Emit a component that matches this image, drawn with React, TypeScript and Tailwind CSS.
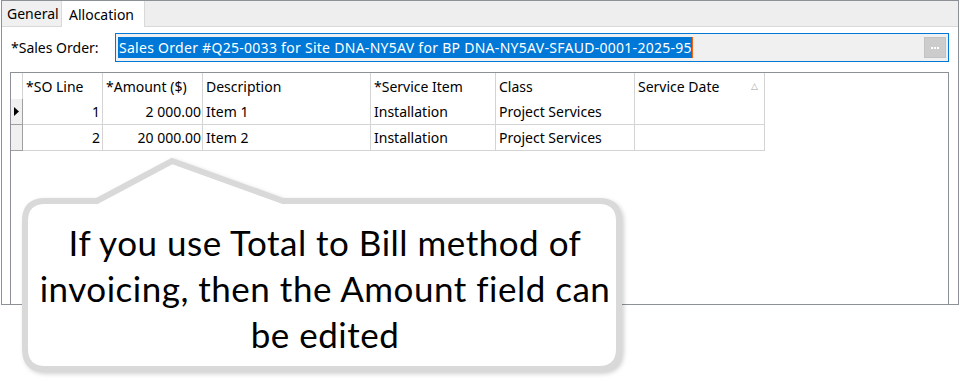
import React from 'react';

const cols = [
  { w: 'w-[80px]', label: '*SO Line' },
  { w: 'w-[100px]', label: '*Amount ($)' },
  { w: 'w-[168px]', label: 'Description' },
  { w: 'w-[125px]', label: '*Service Item' },
  { w: 'w-[139px]', label: 'Class' },
  { w: 'w-[130px]', label: 'Service Date' },
];

const rows = [
  { line: '1', amount: '2 000.00', desc: 'Item 1', item: 'Installation', cls: 'Project Services', date: '', current: true },
  { line: '2', amount: '20 000.00', desc: 'Item 2', item: 'Installation', cls: 'Project Services', date: '', current: false },
];

function Callout() {
  return (
    <div className="absolute left-[20px] top-[154px] w-[610px] h-[224px]">
      <svg width="610" height="224" viewBox="20 154 610 224" className="absolute inset-0 drop-shadow-[2px_2px_2px_rgba(0,0,0,0.18)]">
        <path
          d="M45 201 L97 201 L172 161 L283 201 L599 201 Q619 201 619 221 L619 349 Q619 369 599 369 L45 369 Q25 369 25 349 L25 221 Q25 201 45 201 Z"
          fill="#ffffff"
          stroke="#d9d9d9"
          strokeWidth="6"
          strokeLinejoin="miter"
        />
      </svg>
      <div className="absolute left-[8px] top-[65px] w-[594px] text-center text-[35px] leading-[46px] tracking-[0.5px] text-black font-['Lato',sans-serif]">
        If you use Total to Bill method of
        <br />
        invoicing, then the Amount field can
        <br />
        be edited
      </div>
    </div>
  );
}

export default function App() {
  return (
    <div className="relative w-[960px] h-[381px] bg-white overflow-hidden font-['Noto_Sans',sans-serif] text-[14px] text-black">
      <div className="ml-[1px] w-[958px] h-[305px] border-t border-x border-b border-[#8d9096] flex flex-col">
        {/* tabs */}
        <div className="flex h-[26px] bg-[#eeeeee] border-b border-[#d9d9d9]">
          <div className="w-[60px] h-[25px] flex items-center pl-[5px] bg-[#f0f0f0] border-r border-[#d9d9d9]">General</div>
          <div className="w-[83px] h-[26px] flex items-center pl-[7px] bg-white border-r border-[#d9d9d9]">Allocation</div>
        </div>

        <div className="flex-1 bg-white pl-[8px] pr-[9px] pt-[6px] flex flex-col">
          {/* sales order */}
          <div className="flex items-center h-[29px]">
            <div className="w-[105px] pl-[1px]">*Sales Order:</div>
            <div className="flex-1 h-[29px] border border-[#0078d7] bg-[#f0f0f0] flex items-center pl-[2px] pr-[2px]">
              <span className="bg-[#0078d7] text-white h-[21px] leading-[21px] whitespace-nowrap pl-[1px] tracking-[0.28px]">
                Sales Order #Q25-0033 for Site DNA-NY5AV for BP DNA-NY5AV-SFAUD-0001-2025-95
              </span>
              <span className="w-[1px] h-[21px] bg-[#f7630c]" />
              <div className="flex-1" />
              <div className="w-[22px] h-[21px] bg-[#cccccc] border border-[#c2c2c2] flex items-center justify-center gap-[1px]">
                <span className="w-[2px] h-[2px] bg-white" />
                <span className="w-[2px] h-[2px] bg-white" />
                <span className="w-[2px] h-[2px] bg-white" />
              </div>
            </div>
          </div>

          {/* grid */}
          <div className="mt-[10px] flex-1 border border-[#8d9096] border-b-0">
            <div className="flex h-[26px]">
              <div className="w-[12px] border-r border-[#d4d4d4]" />
              {cols.map((c, i) => (
                <div key={c.label} className={`${c.w} border-r border-[#d4d4d4] flex items-center pl-[3px] ${i === 5 ? 'justify-between pr-[6px]' : ''}`}>
                  <span>{c.label}</span>
                  {i === 5 && <span className="text-[9px] text-[#a5a5a5]">△</span>}
                </div>
              ))}
            </div>
            {rows.map((r) => (
              <div key={r.line} className="flex h-[26px]">
                <div className="w-[12px] bg-[#f0f0f0] border-r border-b border-[#a0a0a0] flex items-center justify-center">
                  {r.current && (
                    <svg width="5" height="9" viewBox="0 0 5 9">
                      <path d="M0 0 L5 4.5 L0 9 Z" fill="#000" />
                    </svg>
                  )}
                </div>
                <div className="w-[80px] border-r border-b border-[#d4d4d4] flex items-center justify-end pr-[2px]">{r.line}</div>
                <div className="w-[100px] border-r border-b border-[#d4d4d4] flex items-center justify-end pr-[1px]">{r.amount}</div>
                <div className="w-[168px] border-r border-b border-[#d4d4d4] flex items-center pl-[3px]">{r.desc}</div>
                <div className="w-[125px] border-r border-b border-[#d4d4d4] flex items-center pl-[3px]">{r.item}</div>
                <div className="w-[139px] border-r border-b border-[#d4d4d4] flex items-center pl-[3px]">{r.cls}</div>
                <div className="w-[130px] border-r border-b border-[#d4d4d4] flex items-center pl-[3px]">{r.date}</div>
              </div>
            ))}
          </div>
        </div>
      </div>

      <Callout />
    </div>
  );
}
